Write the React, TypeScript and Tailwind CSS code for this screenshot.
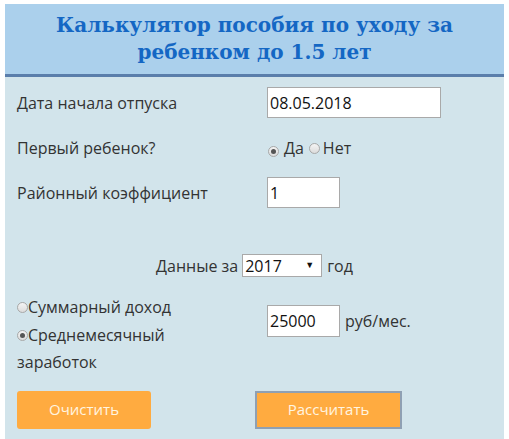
import React from "react";

function Radio({ checked }: { checked?: boolean }) {
  return (
    <span className="inline-flex items-center justify-center w-[11px] h-[11px] rounded-full border border-[#a8a8a8] bg-gradient-to-b from-[#f4f4f4] to-[#dcdcdc] shrink-0">
      {checked && <span className="block w-[5px] h-[5px] rounded-full bg-[#555]" />}
    </span>
  );
}

export default function App() {
  return (
    <div className="w-[509px] h-[439px] bg-white overflow-hidden" style={{ fontFamily: '"Open Sans", sans-serif' }}>
      <div className="ml-[5px] mt-[4px] w-[499px] h-[435px] bg-[#d2e4eb] text-[#333] text-[16px]">
        <div className="h-[73px] bg-[#abd0ec] border-b-[3px] border-[#5a7eab] flex flex-col items-center justify-center">
          <div
            className="text-[#1467c4] text-[20px] font-bold leading-[27px] text-center"
            style={{ fontFamily: '"DejaVu Serif", serif' }}
          >
            Калькулятор пособия по уходу за
            <br />
            ребенком до 1.5 лет
          </div>
        </div>
        <div className="px-[12px]">
          <div className="mt-[10px] flex items-center h-[31px]">
            <div className="w-[250px]">Дата начала отпуска</div>
            <div className="w-[174px] h-[31px] bg-white border border-[#a9a9a9] flex items-center px-[2px] text-[16px] text-[#111]">
              08.05.2018
            </div>
          </div>
          <div className="flex items-center h-[59px]">
            <div className="w-[250px]">Первый ребенок?</div>
            <div className="flex items-center">
              <span className="ml-[1px]"><Radio checked /></span>
              <span className="ml-[5px]">Да</span>
              <span className="ml-[5px]"><Radio /></span>
              <span className="ml-[3px]">Нет</span>
            </div>
          </div>
          <div className="flex items-center h-[31px]">
            <div className="w-[250px]">Районный коэффициент</div>
            <div className="w-[73px] h-[31px] bg-white border border-[#a9a9a9] flex items-center px-[2px] text-[16px] text-[#111]">
              1
            </div>
          </div>
          <div className="mt-[46px] h-[23px] flex items-center justify-center">
            <span>Данные за</span>
            <div className="relative ml-[4px] w-[80px] h-[23px] bg-white border border-[#a9a9a9] flex items-center px-[2px] text-[16px] text-[#111]">
              2017
              <span className="absolute right-[7px] top-[3px] text-[9px] text-[#111]">▼</span>
            </div>
            <span className="ml-[5px]">год</span>
          </div>
          <div className="mt-[17px] flex items-center">
            <div className="w-[250px] leading-[27.5px]">
              <div className="flex items-center">
                <Radio />
                <span>Суммарный доход</span>
              </div>
              <div className="flex items-center">
                <Radio checked />
                <span>Среднемесячный</span>
              </div>
              <div>заработок</div>
            </div>
            <div className="flex items-center -mt-[28px]">
              <div className="w-[73px] h-[32px] bg-white border border-[#a9a9a9] flex items-center px-[2px] text-[16px] text-[#111]">
                25000
              </div>
              <span className="ml-[5px]">руб/мес.</span>
            </div>
          </div>
          <div className="mt-[14px] flex items-center">
            <div className="w-[238px]">
              <button className="w-[134px] h-[38px] rounded-[3px] bg-[#ffab40] text-[#fff5e1] text-[15px]">
                Очистить
              </button>
            </div>
            <button className="w-[147px] h-[38px] bg-[#ffab40] border-2 border-[#8fa0b3] text-[#fff5e1] text-[15px]">
              Рассчитать
            </button>
          </div>
        </div>
      </div>
    </div>
  );
}
